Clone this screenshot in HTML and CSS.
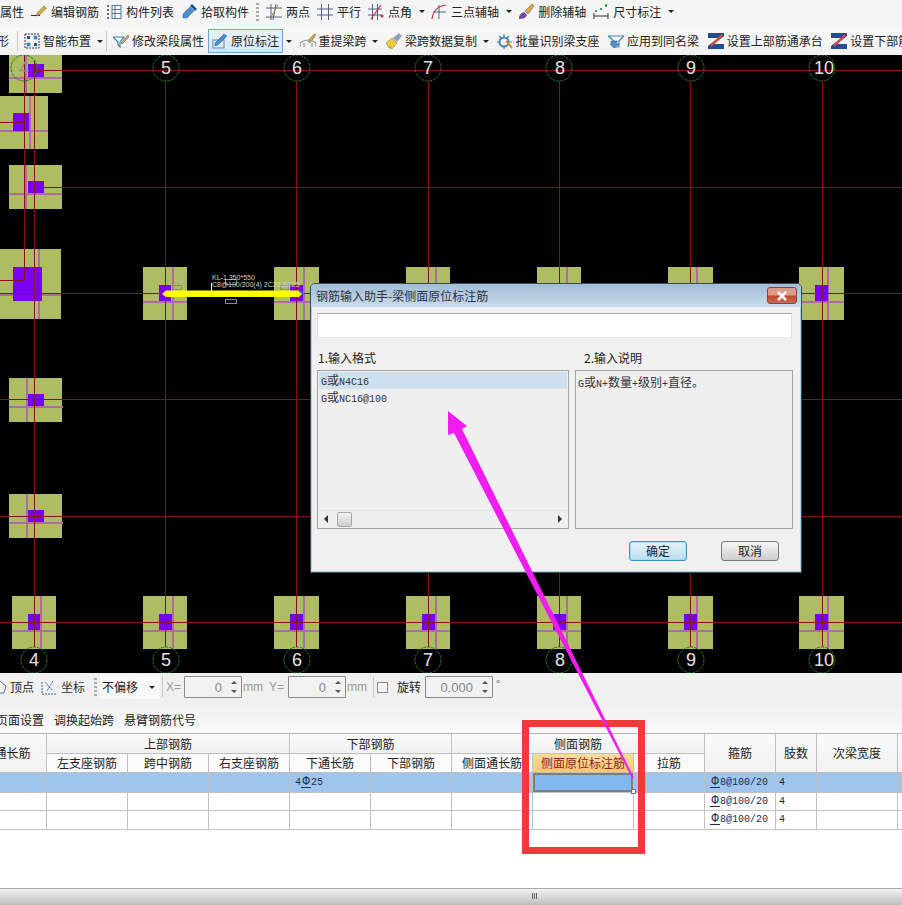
FILE: index.html
```html
<!DOCTYPE html>
<html lang="zh-CN">
<head>
<meta charset="utf-8">
<title>钢筋输入助手</title>
<link rel="stylesheet" href="styles.css">
</head>
<body>
<div class="app">
  <div class="tb tb1">
    <span>属性</span>
    <div class="it"><svg class="ic" viewBox="0 0 16 16"><path class="s-dark" d="M0 11.5h9"/><path class="f-gold" d="M6 9 13 2l2.500 2-7 7-3 1z"/></svg><span>编辑钢筋</span></div>
    <div class="it"><svg class="ic" viewBox="0 0 16 16"><path class="s-dots" d="M2 1v14"/><rect class="s-blue" x="6" y="1.500" width="9" height="13"/><path class="s-blue" d="M6 5.500h9M6 9.500h9M9 1.500v13"/></svg><span>构件列表</span></div>
    <div class="it"><svg class="ic" viewBox="0 0 16 16"><path class="f-blue" d="M9 3 13 7 6 14H2v-4z"/><path class="f-navy" d="M9 2 11 0l5 5-2 2z"/></svg><span>拾取构件</span></div>
    <i class="sep dots"></i>
    <div class="it"><svg class="ic" viewBox="0 0 16 16"><path class="s-axis" d="M0 4h16M0 13h16M5 0v16M10 0 7 16"/><path class="s-gold" d="M12 1 4 15"/></svg><span>两点</span></div>
    <div class="it"><svg class="ic" viewBox="0 0 16 16"><path class="s-axis" d="M0 5h16M0 11h16M4.500 0v16M11.500 0v16"/></svg><span>平行</span></div>
    <div class="it"><svg class="ic" viewBox="0 0 16 16"><path class="s-axis" d="M0 5h14M0 11h14M4.500 0v16M9.500 0v16"/><path class="s-red" d="M13 1 3 15"/><circle class="f-red" cx="14" cy="12" r="1.500"/></svg><span>点角</span></div>
    <i class="arrow"></i>
    <div class="it"><svg class="ic" viewBox="0 0 16 16"><path class="s-red" d="M1 15C2 7 7 2 15 1"/><path class="s-axis" d="M2 8h13M8 1v14"/></svg><span>三点辅轴</span></div>
    <i class="arrow"></i>
    <div class="it"><svg class="ic" viewBox="0 0 16 16"><path class="f-purple" d="M1 15c0-4 2-6 5-7l3 3c-1 3-4 4-8 4z"/><path class="f-gold" d="M7 7 14 0l2 2-6 8z"/></svg><span>删除辅轴</span></div>
    <div class="it"><svg class="ic" viewBox="0 0 16 16"><path class="s-dark" d="M1 9v6M15 9v6M1 12h14"/><rect class="f-green" x="2" y="6" width="2" height="2"/><rect class="f-green" x="12" y="0" width="2" height="3"/><rect class="f-green" x="7" y="4" width="2" height="2"/></svg><span>尺寸标注</span></div>
    <i class="arrow"></i>
  </div>

  <div class="tb tb2">
    <span class="clip-l">形</span>
    <i class="sep line"></i>
    <div class="it"><svg class="ic" viewBox="0 0 16 16"><rect class="s-dash" x="1" y="1" width="14" height="14"/><rect class="f-navy" x="3" y="3" width="3" height="3"/><rect class="f-blue" x="10" y="3" width="3" height="3"/><rect class="f-blue" x="3" y="10" width="3" height="3"/><rect class="f-navy" x="10" y="10" width="3" height="3"/></svg><span>智能布置</span></div>
    <i class="arrow"></i>
    <i class="sep line back"></i>
    <div class="it"><svg class="ic" viewBox="0 0 16 16"><path class="s-teal" d="M0 4h11L7 9v5l-2-2V9z"/><path class="f-gold" d="M8 10 15 2l1 2-7 7z"/></svg><span>修改梁段属性</span></div>
    <div class="it active"><svg class="ic" viewBox="0 0 16 16"><rect class="s-steel" x="1" y="7" width="11" height="8"/><path class="f-blue" d="M3 10 12 1l3 2-9 9-3 1z"/></svg><span>原位标注</span></div>
    <i class="arrow"></i>
    <div class="it"><svg class="ic" viewBox="0 0 16 16"><path class="s-steel" d="M0 14V10q8-6 16 0v4M4 14V10M12 14V10"/><path class="f-gold" d="M8 8 14 1l2 1-6 8z"/></svg><span>重提梁跨</span></div>
    <i class="arrow"></i>
    <div class="it"><svg class="ic" viewBox="0 0 16 16"><path class="f-yellow" d="M0 10 6 5l5 5-5 6H4l1-3-2 2z"/><path class="f-steel" d="M7 5 13 0l3 3-5 6z"/></svg><span>梁跨数据复制</span></div>
    <i class="arrow"></i>
    <div class="it"><svg class="ic" viewBox="0 0 16 16"><circle class="s-blue-w" cx="7" cy="9" r="4.500"/><path class="s-teal" d="M7 1v3M7 14v2M0 9h2M12 9h3M2 3l2 2M12 3l-2 2"/><path class="s-orange" d="m9 8 6 7"/></svg><span>批量识别梁支座</span></div>
    <div class="it"><svg class="ic" viewBox="0 0 16 16"><path class="s-teal" d="M0 3h16l-5 5v6H6V8z"/><path class="f-blue" d="M3 8h6v3h2l-5 4-4-4h1z"/></svg><span>应用到同名梁</span></div>
    <div class="it"><svg class="ic" viewBox="0 0 16 16"><use href="#rebar-ic"/></svg><span>设置上部筋通承台</span></div>
    <div class="it"><svg class="ic" viewBox="0 0 16 16"><g id="rebar-ic"><path class="f-navy" d="M0 0h16v3L6 11h10v5H0v-3L10 5H0z"/><path class="s-red2" d="M3 13 14 2"/></g></svg><span>设置下部筋通承台</span></div>
  </div>

  <div class="canvas">
    <svg class="cad" viewBox="0 55 902 618" width="902" height="618">
      <g class="col">
        <rect x="9" y="55" width="53" height="38"/><rect x="0" y="96" width="48" height="53"/><rect x="9" y="165" width="53" height="44"/>
        <rect x="0" y="249" width="61" height="70"/><rect x="9" y="378" width="53" height="44"/><rect x="9" y="494" width="53" height="44"/>
        <rect x="143" y="267" width="44" height="53"/><rect x="274" y="267" width="45" height="53"/><rect x="406" y="267" width="44" height="53"/>
        <rect x="537" y="267" width="44" height="53"/><rect x="668" y="267" width="45" height="53"/><rect x="799" y="267" width="45" height="53"/>
        <rect x="12" y="596" width="44" height="53"/><rect x="143" y="596" width="44" height="53"/><rect x="274" y="596" width="45" height="53"/>
        <rect x="406" y="596" width="44" height="53"/><rect x="537" y="596" width="44" height="53"/><rect x="668" y="596" width="45" height="53"/><rect x="799" y="596" width="45" height="53"/>
      </g>
      <path class="pink" d="M9 78h53M26 55v38M0 131h48M30 96v53M9 194h53M26 165v44M0 295h61M39 249v70M9 407h54M27 378v44M9 523h54M27 494v44
        M143 302h44M173 267v53M274 302h45M304 267v53M406 302h44M436 267v53M537 302h44M567 267v53M668 302h45M697 267v53M799 302h45M828 267v53
        M12 631h44M41 596v53M143 631h44M173 596v53M274 631h45M304 596v53M406 631h44M436 596v53M537 631h44M567 596v53M668 631h45M697 596v53M799 631h45M828 596v53"/>
      <g class="pur">
        <rect x="28" y="64" width="16" height="13"/><rect x="13" y="113" width="16" height="18"/><rect x="28" y="181" width="16" height="12"/>
        <rect x="13" y="267" width="29" height="34"/><rect x="28" y="394" width="16" height="12"/><rect x="28" y="510" width="16" height="12"/>
        <rect x="159" y="285" width="12" height="16"/><rect x="290" y="285" width="13" height="16"/><rect x="815" y="285" width="13" height="16"/>
        <rect x="28" y="614" width="12" height="16"/><rect x="159" y="614" width="13" height="16"/><rect x="290" y="614" width="13" height="16"/>
        <rect x="422" y="614" width="13" height="16"/><rect x="553" y="614" width="13" height="16"/><rect x="684" y="614" width="13" height="16"/><rect x="815" y="614" width="13" height="16"/>
      </g>
      <path class="ax" d="M34.500 60V647M165.500 81V647M296.500 81V647M428.500 81V647M559.500 81V647M690.500 81V647M822.500 81V647
        M34 70.500H902M34 187.500H902M0 293.500H902M0 399.500H902M0 516.500H902M0 622.500H902
        M24.500 55V280.500H0M0 122.500H24"/>
      <g class="ring">
        <circle cx="24" cy="68" r="13"/><circle cx="166" cy="68" r="13"/><circle cx="297" cy="68" r="13"/><circle cx="428" cy="68" r="13"/><circle cx="559" cy="68" r="13"/><circle cx="691" cy="68" r="13"/><circle cx="822" cy="68" r="13"/>
        <circle cx="34" cy="660" r="13"/><circle cx="166" cy="660" r="13"/><circle cx="297" cy="660" r="13"/><circle cx="428" cy="660" r="13"/><circle cx="559" cy="660" r="13"/><circle cx="691" cy="660" r="13"/><circle cx="822" cy="660" r="13"/>
      </g>
      <g class="num">
        <text class="num-dim" x="24" y="74">4</text><text x="166" y="74">5</text><text x="297" y="74">6</text><text x="428" y="74">7</text><text x="560" y="74">8</text><text x="691" y="74">9</text><text x="824" y="74">10</text>
        <text x="34" y="666">4</text><text x="166" y="666">5</text><text x="297" y="666">6</text><text x="428" y="666">7</text><text x="560" y="666">8</text><text x="691" y="666">9</text><text x="824" y="666">10</text>
      </g>
      <path class="beam" d="M162 294l4-3.500h133l3 3.500-3 3H166z"/>
      <path class="tick-w" d="M211.500 283v8"/>
      <path class="tick-b" d="M299 291l5 3"/>
      <g class="gbox"><rect x="225.500" y="279.500" width="11" height="5"/><rect x="225.500" y="299.500" width="11" height="4"/><rect x="173.500" y="285.500" width="8" height="4"/><rect x="280.500" y="285.500" width="8" height="4"/></g>
      <text class="beam-t" x="212" y="280">KL-1 350*550</text>
      <text class="beam-t" x="212" y="287">C8@100/200(4) 2C25;8C25</text>
    </svg>
  </div>

  <div class="props">
    <svg class="ic vert" viewBox="8 0 8 16"><path class="s-blue" d="M8 2 14 7l-2 7H8"/></svg>
    <span class="p-t1">顶点</span>
    <svg class="ic p-ic2" viewBox="0 0 16 16"><path class="s-dash2" d="M1 3v12h14M4 3l8 9M12 2 6 12"/></svg>
    <span class="p-t2">坐标</span>
    <i class="sep dots p-sep"></i>
    <div class="combo"><span>不偏移</span><i class="arrow"></i></div>
    <i class="sep line p-sep2"></i>
    <span class="gray p-x">X=</span>
    <div class="spin"><span>0</span><div class="spin-btn"><i class="up"></i><i class="down"></i></div></div>
    <span class="gray p-mm">mm</span>
    <span class="gray p-y">Y=</span>
    <div class="spin"><span>0</span><div class="spin-btn"><i class="up"></i><i class="down"></i></div></div>
    <span class="gray p-mm">mm</span>
    <i class="sep line p-sep3"></i>
    <i class="check"></i>
    <span class="p-rot">旋转</span>
    <div class="spin spin-wide"><span>0.000</span><div class="spin-btn"><i class="up"></i><i class="down"></i></div></div>
    <span class="deg">°</span>
  </div>

  <div class="tb3">
    <span class="clip-l2">页面设置</span>
    <span>调换起始跨</span>
    <span>悬臂钢筋代号</span>
  </div>

  <div class="grid-wrap">
    <table class="grid">
      <colgroup>
        <col class="c68"><col class="c81"><col class="c81"><col class="c81"><col class="c81"><col class="c81"><col class="c81"><col class="c101"><col class="c71"><col class="c71"><col class="c41"><col class="c81"><col class="c40">
      </colgroup>
      <thead>
        <tr class="h1">
          <th rowspan="2">通长筋</th>
          <th colspan="3">上部钢筋</th>
          <th colspan="2">下部钢筋</th>
          <th colspan="3">侧面钢筋</th>
          <th rowspan="2">箍筋</th>
          <th rowspan="2">肢数</th>
          <th rowspan="2">次梁宽度</th>
          <th rowspan="2"></th>
        </tr>
        <tr class="h2">
          <th>左支座钢筋</th><th>跨中钢筋</th><th>右支座钢筋</th><th>下通长筋</th><th>下部钢筋</th><th>侧面通长筋</th><th class="hot">侧面原位标注筋</th><th>拉筋</th>
        </tr>
      </thead>
      <tbody>
        <tr class="r1 sel">
          <td></td><td></td><td></td><td></td><td class="val">4<b class="rb">Φ</b>25</td><td></td><td></td><td class="cur"><i class="handle"></i></td><td></td><td class="val"><b class="rb">Φ</b>8@100/20</td><td class="val n">4</td><td></td><td></td>
        </tr>
        <tr class="r2">
          <td></td><td></td><td></td><td></td><td></td><td></td><td></td><td></td><td></td><td class="val"><b class="rb">Φ</b>8@100/20</td><td class="val n">4</td><td></td><td></td>
        </tr>
        <tr class="r3">
          <td></td><td></td><td></td><td></td><td></td><td></td><td></td><td></td><td></td><td class="val"><b class="rb">Φ</b>8@100/20</td><td class="val n">4</td><td></td><td></td>
        </tr>
      </tbody>
    </table>
  </div>

  <div class="hbar"><i class="grip"></i></div>
</div>

<div class="dialog">
  <div class="d-title">
    <span>钢筋输入助手-梁侧面原位标注筋</span>
    <div class="d-close"><svg viewBox="0 0 12 10" width="12" height="10"><path class="x-mark" d="M2 1l8 8M10 1 2 9"/></svg></div>
  </div>
  <div class="d-body">
    <div class="d-input"></div>
    <div class="d-labels"><span class="l1">1.输入格式</span><span class="l2">2.输入说明</span></div>
    <div class="d-panes">
      <div class="pane">
        <div class="list">
          <div class="row on">G<span class="zh">或</span>N4C16</div>
          <div class="row">G<span class="zh">或</span>NC16@100</div>
        </div>
        <div class="hs"><i class="hs-l"></i><i class="hs-thumb"></i><i class="hs-r"></i></div>
      </div>
      <div class="pane note">G<span class="zh">或</span>N+<span class="zh">数量</span>+<span class="zh">级别</span>+<span class="zh">直径。</span></div>
    </div>
    <div class="d-btns"><div class="btn primary">确定</div><div class="btn">取消</div></div>
  </div>
</div>

<div class="redbox"></div>
<svg class="annot" viewBox="0 0 902 905" width="902" height="905"><polygon class="mag" points="448,411 467,426 462,429 634,778 632,778 454,433 448,435"/></svg>
</body>
</html>
```

FILE: styles.css
```css
* { box-sizing: border-box; }
html, body { margin: 0; padding: 0; }
body {
  width: 902px; height: 905px; overflow: hidden; position: relative;
  font: 12px/16px "Noto Sans CJK SC", "Liberation Sans", sans-serif;
  color: #222; background: #fff;
}
.app { width: 902px; height: 905px; display: flex; flex-direction: column; overflow: hidden; }
i { display: block; font-style: normal; }

/* toolbars */
.tb { display: flex; align-items: center; white-space: nowrap; flex: none; }
.tb1 { height: 27px; gap: 7px; background: #f5f5f5; padding-bottom: 4px; }
.tb2 { height: 28px; gap: 6px; background: linear-gradient(#f8f8f8, #f1f1f1); }
.it { display: flex; align-items: center; gap: 4px; flex: none; }
.ic { width: 16px; height: 16px; flex: none; display: block; }
.tb2 .it { gap: 3px; margin-left: 2.5px; }
.tb2 .sep + .it { margin-left: 0; }
.clip-l { margin-left: -3px; margin-right: 2px; }
.sep.line { width: 1px; height: 20px; background: #c8c8c8; flex: none; }
.sep.back { margin-left: -2px; }
.sep.dots { width: 3px; height: 18px; flex: none; background: repeating-linear-gradient(#aaa 0 2px, transparent 2px 4px); }
.arrow { width: 0; height: 0; flex: none; border: 3px solid transparent; border-top: 3px solid #222; border-bottom: 0; margin: 0 -0.5px; }
.tb2 .active {
  margin-left: -2px; margin-right: -3px; height: 24px; padding: 0 3px;
  background: linear-gradient(#e8f3fc, #d3e7f8); border: 1px solid #6aa4d8;
}

/* svg paints */
svg path, svg rect, svg circle { fill: none; }
.s-dark { stroke: #333; stroke-width: 1; }
.s-dots { stroke: #667; stroke-width: 2; stroke-dasharray: 2 2; }
.s-blue { stroke: #4a7ea8; stroke-width: 1; }
.s-axis { stroke: #55608a; stroke-width: 1; }
.s-gold { stroke: #a08a30; stroke-width: 1; }
.s-red { stroke: #c8323c; stroke-width: 1.200; }
.s-red2 { stroke: #e04a30; stroke-width: 2; }
.s-dash { stroke: #334; stroke-dasharray: 2 1; }
.s-dash2 { stroke: #2d6a9c; stroke-dasharray: 2 1; }
.s-teal { stroke: #3d86a8; stroke-width: 1.200; }
.s-steel { stroke: #7d97b5; stroke-width: 1.200; }
.s-blue-w { stroke: #3f83c0; stroke-width: 2; }
.s-orange { stroke: #d98a2b; stroke-width: 2; }
svg .f-gold { fill: #d9a94a; stroke: #554; stroke-width: .5; }
svg .f-blue { fill: #4c8fd0; stroke: #2a5f95; stroke-width: .5; }
svg .f-navy { fill: #1f4f8f; }
svg .f-red { fill: #c8323c; }
svg .f-purple { fill: #6a4ca0; }
svg .f-green { fill: #3aa34a; }
svg .f-yellow { fill: #e8cc48; stroke: #8a7a30; stroke-width: .5; }
svg .f-steel { fill: #8fa3bb; }

/* CAD canvas */
.canvas { height: 618px; flex: none; background: #000; overflow: hidden; }
.cad { display: block; }
svg .col rect { fill: #aebd62; }
svg .pink { stroke: #b06ba0; stroke-width: 2; }
svg .pur rect { fill: #7a00f2; }
svg .ax { stroke: #8a0d1a; stroke-width: 1; }
svg .ring circle { stroke: #1f7d2a; stroke-width: 1; stroke-dasharray: 3 1; }
.num text { font: 18px "Liberation Sans", sans-serif; fill: #e4e4e4; text-anchor: middle; }
.num .num-dim { fill: #8f8f8f; }
svg .beam { fill: #ffff00; }
svg .tick-w { stroke: #fff; stroke-width: 1; }
svg .tick-b { stroke: #2a7ae8; stroke-width: 2; }
svg .gbox rect { stroke: #8a8a8a; stroke-width: 1; }
.beam-t { font: 7px "Liberation Sans", sans-serif; fill: #cfcfcf; }

/* property bar */
.props { height: 33px; flex: none; display: flex; align-items: center; background: #f0f0f0; white-space: nowrap; padding-bottom: 5px; }
.props .vert { width: 8px; }
.p-t1 { margin-left: 2px; }
.p-ic2 { margin-left: 7px; }
.p-t2 { margin-left: 4px; color: #333; }
.p-sep { margin-left: 9px; }
.combo { width: 60px; margin-left: 3px; height: 24px; display: flex; align-items: center; justify-content: space-between; padding: 0 6px 0 2px; background: #f8f8f8; }
.p-sep2 { margin-left: 2px; }
.gray { color: #9a9a9a; font-family: "Liberation Sans", sans-serif; }
.p-x { margin-left: 3px; width: 18px; }
.spin { width: 58px; height: 22px; border: 1px solid #8a8a8a; border-radius: 1px; background: #f2f2f2; display: flex; align-items: center; justify-content: flex-end; color: #888; font: 13px "Liberation Sans", sans-serif; flex: none; }
.spin-btn { width: 19px; display: flex; flex-direction: column; align-items: center; gap: 6px; padding-left: 5px; }
.up, .down { width: 0; height: 0; border: 3px solid transparent; }
.up { border-top: 0; border-bottom: 3px solid #555; }
.down { border-bottom: 0; border-top: 3px solid #555; }
.p-mm { margin-left: 1px; width: 21px; }
.p-y { margin-left: 5px; width: 19px; }
.p-sep3 { margin-left: 5px; }
.check { width: 11px; height: 11px; border: 1px solid #8a8a8a; background: #f6f6f6; margin-left: 3px; flex: none; }
.p-rot { margin-left: 9px; }
.spin-wide { width: 68px; margin-left: 4px; }
.deg { margin-left: 3px; color: #777; margin-top: -6px; }

.tb3 { height: 27px; flex: none; display: flex; align-items: center; gap: 10px; white-space: nowrap; background: linear-gradient(#f1f1f1, #fafafa); }
.clip-l2 { margin-left: -4px; }

/* grid */
.grid-wrap { flex: 1; min-height: 0; overflow: hidden; border-top: 1px solid #b4b4b4; background: #fff; position: relative; }
.grid { table-layout: fixed; width: 959px; margin-left: -21px; border-collapse: separate; border-spacing: 0; }
.c68 { width: 68px; } .c81 { width: 81px; } .c101 { width: 101px; } .c71 { width: 71px; } .c41 { width: 41px; } .c40 { width: 40px; }
.grid th, .grid td { border-right: 1px solid #c0c0c0; border-bottom: 1px solid #c0c0c0; padding: 0; overflow: hidden; white-space: nowrap; }
.grid th { font-weight: 400; color: #222; text-align: center; background: linear-gradient(#fafafa, #f1f1f1); }
.h1 { height: 20px; } .h2 { height: 19px; }
.h2 th { background: #fbfbfb; }
.grid th.hot { background: linear-gradient(#fbdc9b, #f6c675); color: #8a1f1f; }
.r1 { height: 20px; } .r2 { height: 18px; } .r3 { height: 19px; }
.sel td { background: #9fc5ec; }
.grid td.val { font: 10px/12px "Liberation Mono", monospace; color: #1d2c55; padding-left: 5px; }
.grid td.n { color: #222; padding-left: 3px; }
.rb { font-weight: 400; font-size: 12px; display: inline-block; width: 10px; text-align: center; border-bottom: 1px solid currentColor; line-height: 10px; }
.grid td.cur { background: #82b8ef; box-shadow: inset 0 0 0 2px #7d7d7d; overflow: visible; position: relative; }
.handle { position: absolute; right: -3px; bottom: -2px; width: 5px; height: 5px; background: #fff; border: 1px solid #777; }

.hbar { height: 17px; flex: none; border-top: 1px solid #a8a8a8; background: linear-gradient(#f4f4f4, #bdbdbd); display: flex; justify-content: center; padding: 4px 0 0 168px; }
.grip { width: 6px; height: 6px; background: repeating-linear-gradient(90deg, #666 0 1px, transparent 1px 2px); }

/* dialog */
.dialog {
  position: absolute; left: 310px; top: 283px; width: 492px; height: 290px;
  display: flex; flex-direction: column;
  border: 1px solid #3e4a55; border-top-left-radius: 5px; border-top-right-radius: 5px;
  box-shadow: inset 0 0 0 1px #a9d3e6;
  background: #f0f0f0; overflow: hidden;
}
.d-title { height: 23px; flex: none; display: flex; align-items: center; justify-content: space-between; padding: 0 4px 0 5px; background: linear-gradient(#a2bdd8, #c8daeb); color: #2a3440; }
.d-close { width: 30px; height: 17px; display: flex; align-items: center; justify-content: center; border: 1px solid #7b4a44; border-radius: 3px; background: linear-gradient(#dd9a8b 0 45%, #c4472f 55%, #c96a55); }
svg .x-mark { stroke: #fff; stroke-width: 2.500; }
.d-body { flex: 1; display: flex; flex-direction: column; padding: 6px 8px 0 5px; border-left: 1px solid #a9d3e6; border-right: 1px solid #a9d3e6; border-bottom: 1px solid #a9d3e6; }
.d-input { height: 25px; background: #fff; border-top: 1px solid #aaa; border-left: 1px solid #ddd; border-right: 1px solid #ddd; border-bottom: 1px solid #e8e8e8; flex: none; }
.d-labels { display: grid; grid-template-columns: 258px 1fr; margin-top: 12px; height: 20px; }
.l1 { padding-left: 1px; }
.l2 { padding-left: 9px; }
.d-panes { display: grid; grid-template-columns: 252px 218px; gap: 6px; height: 159px; flex: none; }
.pane { border: 1px solid #a4a4a4; display: flex; flex-direction: column; min-height: 0; background: #efefef; }
.list { flex: 1; padding: 1px 1px 0; }
.row, .pane.note { font: 10px/16px "Liberation Mono", monospace; color: #333; }
.row { height: 17px; padding-left: 2px; }
.row.on { background: #cfe0ee; }
.zh { font: 12px/16px "Noto Sans CJK SC", sans-serif; }
.pane.note { display: block; padding: 3px 2px; }
.hs { height: 17px; flex: none; margin: 0 0 1px; display: flex; align-items: center; position: relative; border-top: 1px solid #e4e4e4; padding-left: 6px; }
.hs-l { width: 0; height: 0; border: 4px solid transparent; border-left: 0; border-right: 4px solid #333; }
.hs-thumb { width: 15px; height: 15px; margin-left: 9px; border: 1px solid #a8a8a8; border-radius: 2px; background: linear-gradient(#f2f2f2, #cfcfcf); }
.hs-r { width: 0; height: 0; border: 4px solid transparent; border-right: 0; border-left: 4px solid #333; margin-left: auto; margin-right: 6px; }
.d-btns { display: flex; justify-content: flex-end; gap: 34px; margin-top: 12px; padding-right: 13px; }
.btn { width: 58px; height: 20px; text-align: center; line-height: 18px; border: 1px solid #7a7a7a; border-radius: 3px; background: linear-gradient(#f7f7f7, #cdcdcd); color: #222; }
.btn.primary { border-color: #3d97c6; box-shadow: inset 0 0 0 1px #a5dcf2; background: linear-gradient(#e9f5fb, #bcdcec); }

/* annotation overlay */
.redbox { position: absolute; left: 522px; top: 720px; width: 123px; height: 134px; border: 7px solid #f23a3a; pointer-events: none; }
.annot { position: absolute; left: 0; top: 0; pointer-events: none; }
svg .mag { fill: #f01cf0; }
```
